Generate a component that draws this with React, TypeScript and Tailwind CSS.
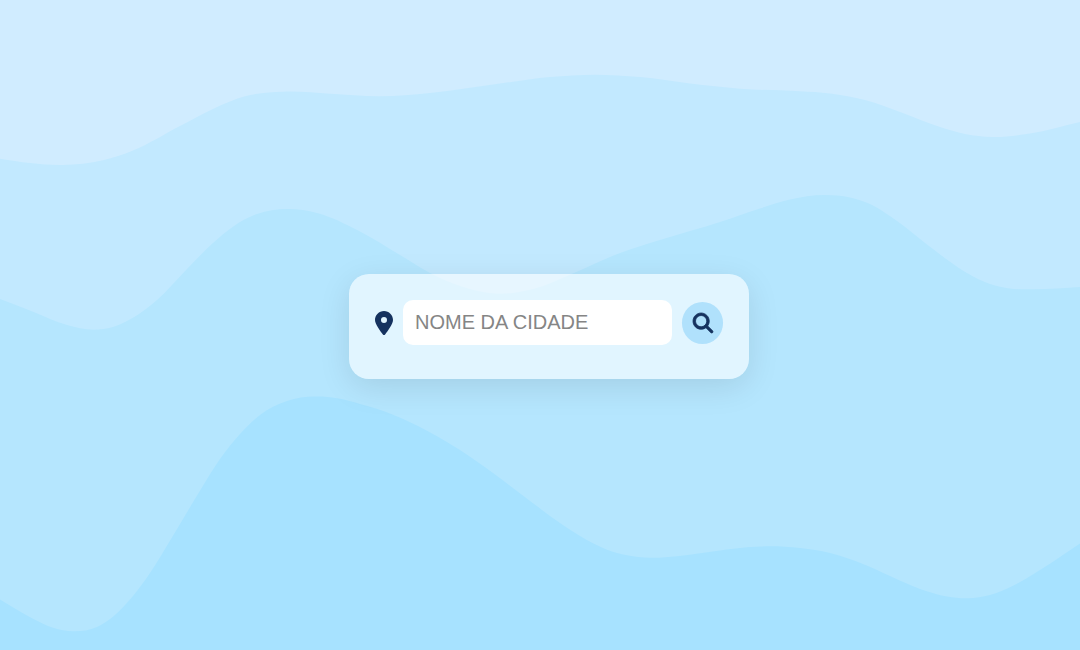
import { useState } from "react";
import { FaLocationDot, FaMagnifyingGlass } from "react-icons/fa6";

type Point = [number, number];

const upperWave: Point[] = [
  [0, 158.7], [30, 163], [63, 165], [103, 160.3], [133, 150.5], [180, 126], [215, 108],
  [245, 96.3], [283, 91.7], [330, 93.7], [380, 96.3], [430, 93], [500, 83.5], [550, 77],
  [595, 74.7], [640, 77], [690, 83.5], [740, 88.7], [800, 91.3], [830, 93.5], [865, 100],
  [900, 112], [940, 127], [965, 134], [992, 137], [1030, 133.5], [1080, 122],
];

const middleWave: Point[] = [
  [0, 299], [33, 311.7], [67, 325], [94, 329.7], [113, 327], [133, 317.7], [157, 300],
  [187, 269], [213, 243], [233, 226.7], [257, 214], [287, 209], [317, 213], [360, 231.5],
  [400, 255], [430, 273], [460, 286], [498, 293.7], [535, 288.5], [574, 273], [620, 253],
  [660, 240], [720, 222], [760, 208.5], [790, 199.5], [825, 195], [850, 197.5], [870, 204],
  [897, 221], [927, 244.5], [950, 261.7], [967, 273], [990, 284], [1010, 288.5],
  [1033, 289.3], [1080, 287],
];

const lowerWave: Point[] = [
  [0, 599.5], [33, 618.7], [53, 627.7], [73, 631.3], [97, 627], [113, 616.7], [133, 596],
  [150, 573], [173, 535.7], [200, 490.7], [220, 459], [240, 434], [260, 415], [287, 401],
  [315, 396.6], [337, 398.3], [360, 404], [393, 414.7], [427, 430.7], [460, 450], [493, 473],
  [533, 503.3], [560, 523], [580, 536], [607, 549.7], [627, 555.3], [650, 557.8], [677, 556.3],
  [720, 550.5], [747, 547.3], [770, 546.3], [800, 548], [830, 553], [863, 564], [890, 576],
  [920, 589], [947, 596.5], [968, 598.3], [990, 595], [1013, 585.7], [1040, 570], [1080, 543.5],
];

// Smooth curve through the points, closed along the bottom edge.
function wavePath(points: Point[]): string {
  const chord = (i: number) =>
    (points[i + 1][1] - points[i][1]) / (points[i + 1][0] - points[i][0]);
  const last = points.length - 1;
  const slope = points.map(([x], i) => {
    if (i === 0) return chord(0);
    if (i === last) return chord(last - 1);
    const before = x - points[i - 1][0];
    const after = points[i + 1][0] - x;
    return (chord(i - 1) * after + chord(i) * before) / (before + after);
  });
  let d = `M${points[0][0]} ${points[0][1]}`;
  for (let i = 1; i <= last; i++) {
    const [x0, y0] = points[i - 1];
    const [x1, y1] = points[i];
    const h = (x1 - x0) / 3;
    d += `C${x0 + h} ${y0 + slope[i - 1] * h} ${x1 - h} ${y1 - slope[i] * h} ${x1} ${y1}`;
  }
  return `${d}V650H0Z`;
}

function Waves() {
  return (
    <svg
      className="absolute inset-0 h-full w-full"
      viewBox="0 0 1080 650"
      preserveAspectRatio="none"
      aria-hidden="true"
    >
      <path d={wavePath(upperWave)} fill="#c2e9ff" />
      <path d={wavePath(middleWave)} fill="#b5e6fe" />
      <path d={wavePath(lowerWave)} fill="#a7e2ff" />
    </svg>
  );
}

export default function App() {
  const [city, setCity] = useState("");

  return (
    <main className="relative flex min-h-screen items-center justify-center bg-[#d0ecff] pt-[3px] pl-[18px] font-['Liberation_Sans',Arial,sans-serif]">
      <Waves />
      <form
        className="relative flex w-full max-w-[400px] items-center gap-2.5 rounded-[20px] bg-white/60 px-[26px] pt-[26px] pb-[34px] shadow-[0_8px_32px_rgba(0,0,0,0.1)]"
        onSubmit={(event) => event.preventDefault()}
      >
        <label htmlFor="city" aria-label="Nome da cidade">
          <FaLocationDot className="h-6 w-[18px] text-[#15325f]" />
        </label>
        <input
          id="city"
          type="text"
          value={city}
          onChange={(event) => setCity(event.target.value)}
          placeholder="NOME DA CIDADE"
          className="h-[45px] min-w-0 flex-1 rounded-[10px] bg-white px-3 text-[20px] text-[#15325f] uppercase outline-none placeholder:text-[#858585]"
        />
        <button
          type="submit"
          aria-label="Buscar"
          className="flex h-[42px] w-[41px] items-center justify-center rounded-full bg-[#b0e1fc] text-[#15325f]"
        >
          <FaMagnifyingGlass className="size-5 overflow-visible stroke-[20]" />
        </button>
      </form>
    </main>
  );
}
